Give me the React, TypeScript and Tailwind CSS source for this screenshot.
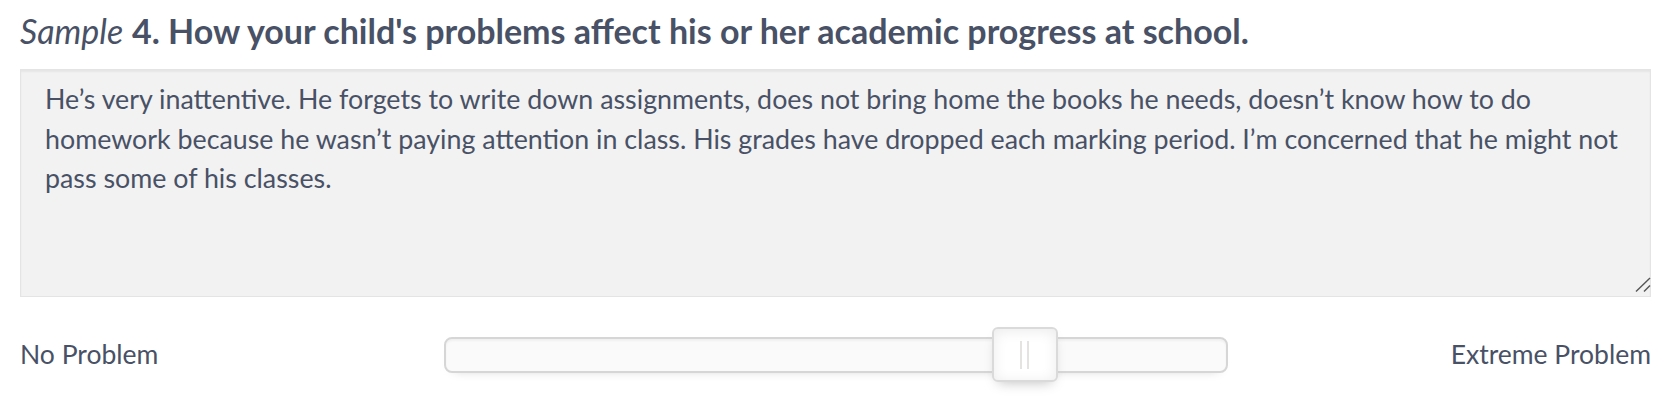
import { useState } from "react";

const answer =
  "He\u2019s very inattentive. He forgets to write down assignments, does not bring home the books he needs, doesn\u2019t know how to do\nhomework because he wasn\u2019t paying attention in class. His grades have dropped each marking period. I\u2019m concerned that he might not\npass some of his classes.";

export default function App() {
  const [text, setText] = useState(answer);
  const [value] = useState(70);

  return (
    <div
      className="w-full h-[406px] bg-white pl-[20px] pr-[23px] text-[#485165]"
      style={{ fontFamily: "Lato, 'Open Sans', sans-serif" }}
    >
      <h2 className="pt-[14px] text-[34px] leading-none">
        <em className="font-normal">Sample</em>{" "}
        <strong className="font-bold">
          4. How your child's problems affect his or her academic progress at school.
        </strong>
      </h2>

      <div className="relative mt-[21px]">
        <textarea
          className="block w-full h-[228px] resize-none bg-[#f2f2f2] border border-[#e4e4e4] shadow-[inset_0_2px_2px_rgba(0,0,0,0.05)] pt-[10px] pl-[24px] pr-[10px] text-[26.8px] leading-[39.5px] text-[#485165] outline-none"
          style={{ fontFamily: "Lato, 'Open Sans', sans-serif" }}
          value={text}
          onChange={(e) => setText(e.target.value)}
        />
        {/* resize grip */}
        <svg
          className="absolute right-0 bottom-[4px] pointer-events-none"
          width="16"
          height="16"
          viewBox="0 0 16 16"
        >
          <path d="M1 14.5 L15 1" stroke="#555" strokeWidth="1.4" fill="none" />
          <path d="M9 14.5 L15 8.5" stroke="#555" strokeWidth="1.4" fill="none" />
        </svg>
      </div>

      <div className="mt-[30px] h-[56px] grid grid-cols-[1fr_784px_1fr] items-center text-[26.5px]">
        <span>No Problem</span>

        <div className="relative h-[36px] rounded-[8px] border-2 border-[#d6d6d6] bg-[#fafafa] shadow-[inset_0_2px_2px_#f0f0f0,0_6px_12px_-10px_#bbb]">
          <div
            className="absolute top-[-12px] w-[66px] h-[55px] rounded-[6px] border-2 border-[#dadada] bg-white shadow-[inset_0_2px_14px_#ebebeb,0_6px_12px_-6px_#bbb] flex justify-center items-center gap-[5px]"
            style={{ left: `${value}%` }}
          >
            <span className="w-[2px] h-[28px] bg-[#e4e3e2]" />
            <span className="w-[2px] h-[28px] bg-[#e4e3e2]" />
          </div>
        </div>

        <span className="text-right">Extreme Problem</span>
      </div>
    </div>
  );
}
